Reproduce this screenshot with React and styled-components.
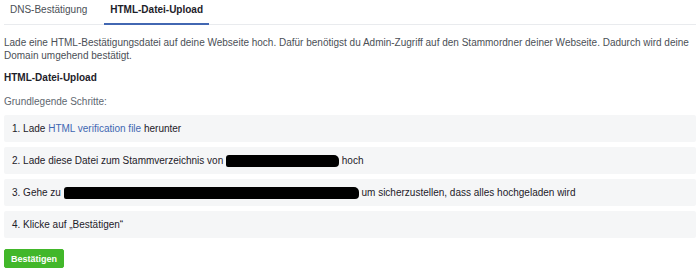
import React, { useState } from 'react'
import styled, { createGlobalStyle } from 'styled-components'

const GlobalStyle = createGlobalStyle`
  body {
    margin: 0;
    background: #fff;
    font-family: "Liberation Sans", Arial, sans-serif;
    -webkit-font-smoothing: antialiased;
  }
`;

export default function App() {
  const [tab, setTab] = useState('html');

  return (
    <Page>
      <GlobalStyle />
      <Tabs>
        <Tab $active={tab === 'dns'} onClick={() => setTab('dns')}>DNS-Bestätigung</Tab>
        <Tab $active={tab === 'html'} onClick={() => setTab('html')}>HTML-Datei-Upload</Tab>
      </Tabs>

      <Intro>
        Lade eine HTML-Bestätigungsdatei auf deine Webseite hoch. Dafür benötigst du Admin-Zugriff auf den Stammordner deiner Webseite. Dadurch wird deine Domain umgehend bestätigt.
      </Intro>

      <Heading>HTML-Datei-Upload</Heading>
      <SubHeading>Grundlegende Schritte:</SubHeading>

      <StepList>
        <Step>1. Lade <Link href="#">HTML verification file</Link> herunter</Step>
        <Step>2. Lade diese Datei zum Stammverzeichnis von <Redacted $w={113} /> hoch</Step>
        <Step>3. Gehe zu <Redacted $w={295} /> um sicherzustellen, dass alles hochgeladen wird</Step>
        <Step>4. Klicke auf „Bestätigen“</Step>
      </StepList>

      <ConfirmButton>Bestätigen</ConfirmButton>
    </Page>
  )
}

const Page = styled.div`
  padding: 0 4px;
  width: 692px;
  font-size: 10px;
  line-height: 13px;
  color: #1d2129;
`;

const Tabs = styled.div`
  display: flex;
  gap: 11px;
  height: 24px;
  border-bottom: 1px solid #e9ebee;
`;

const Tab = styled.div`
  display: flex;
  align-items: center;
  padding: 0 6px 4px;
  font-size: 10px;
  cursor: pointer;
  color: ${p => (p.$active ? '#1d2129' : '#4b4f56')};
  font-weight: ${p => (p.$active ? 'bold' : 'normal')};
  border-bottom: 2px solid ${p => (p.$active ? '#4267b2' : 'transparent')};
  margin-bottom: -1px;
  box-sizing: border-box;
  height: 25px;
`;

const Intro = styled.p`
  margin: 11px 0 0;
  color: #4b4f56;
`;

const Heading = styled.h4`
  margin: 9px 0 0;
  font-size: 10px;
  font-weight: bold;
  color: #1d2129;
`;

const SubHeading = styled.div`
  margin-top: 11px;
  color: #606770;
`;

const StepList = styled.div`
  display: flex;
  flex-direction: column;
  gap: 5px;
  margin-top: 7px;
`;

const Step = styled.div`
  display: flex;
  align-items: center;
  white-space: pre;
  height: 27px;
  padding: 0 8px;
  background: #f5f6f7;
  border-radius: 2px;
  color: #1d2129;
`;

const Link = styled.a`
  color: #4267b2;
  text-decoration: none;
`;

const Redacted = styled.span`
  display: inline-block;
  width: ${p => p.$w}px;
  height: 12px;
  background: #000;
  border-radius: 3px 5px 4px 2px;
`;

const ConfirmButton = styled.button`
  margin-top: 11px;
  height: 19px;
  padding: 0 6px;
  background: #42b72a;
  border: 1px solid #42b72a;
  border-radius: 2px;
  color: #fff;
  font-family: "Liberation Sans", Arial, sans-serif;
  font-size: 9px;
  font-weight: bold;
  cursor: pointer;
`;
